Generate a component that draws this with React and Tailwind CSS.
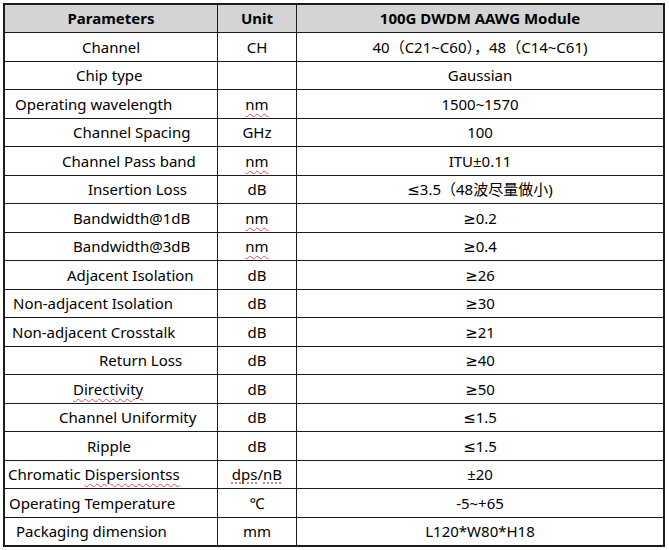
import React from "react";

const squiggle = "underline decoration-wavy decoration-[#e05050] decoration-1 underline-offset-[3px]";
const dotted = "underline decoration-dotted decoration-[#e05050] underline-offset-[3px]";

const rows = [
  { name: "Channel", pad: "pl-[77px]", unit: "CH", value: "40（C21~C60），48（C14~C61)" },
  { name: "Chip type", pad: "pl-[71px]", unit: "", value: "Gaussian" },
  { name: "Operating wavelength", pad: "pl-[10px]", unit: "nm", mark: true, value: "1500~1570" },
  { name: "Channel Spacing", pad: "pl-[68px]", unit: "GHz", value: "100" },
  { name: "Channel Pass band", pad: "pl-[57px]", unit: "nm", mark: true, value: "ITU±0.11" },
  { name: "Insertion Loss", pad: "pl-[83px]", unit: "dB", value: "≤3.5（48波尽量做小)" },
  { name: "Bandwidth@1dB", pad: "pl-[68px]", unit: "nm", mark: true, value: "≥0.2" },
  { name: "Bandwidth@3dB", pad: "pl-[68px]", unit: "nm", mark: true, value: "≥0.4" },
  { name: "Adjacent Isolation", pad: "pl-[62px]", unit: "dB", value: "≥26" },
  { name: "Non-adjacent Isolation", pad: "pl-[8px]", unit: "dB", value: "≥30" },
  { name: "Non-adjacent Crosstalk", pad: "pl-[7px]", unit: "dB", value: "≥21" },
  { name: "Return Loss", pad: "pl-[94px]", unit: "dB", value: "≥40" },
  { name: "Directivity", pad: "pl-[68px]", unit: "dB", value: "≥50", nameMark: true },
  { name: "Channel Uniformity", pad: "pl-[54px]", unit: "dB", value: "≤1.5" },
  { name: "Ripple", pad: "pl-[82px]", unit: "dB", value: "≤1.5" },
  { name: "Chromatic Dispersiontss", pad: "pl-[3px]", unit: "dps/nB", value: "±20", disp: true },
  { name: "Operating Temperature", pad: "pl-[4px]", unit: "℃", value: "-5~+65" },
  { name: "Packaging dimension", pad: "pl-[11px]", unit: "mm", value: "L120*W80*H18" },
];

function Name({ row }) {
  if (row.nameMark) return <span className={squiggle}>{row.name}</span>;
  if (row.disp)
    return (
      <span>
        Chromatic <span className={squiggle}>Dispersiontss</span>
      </span>
    );
  return <span>{row.name}</span>;
}

function Unit({ row }) {
  if (row.mark) return <span className={squiggle}>{row.unit}</span>;
  if (row.disp)
    return (
      <span>
        <span className={dotted}>dps</span>/<span className={dotted}>nB</span>
      </span>
    );
  return <span>{row.unit}</span>;
}

export default function App() {
  return (
    <div className="w-[669px] h-[550px] bg-white pt-[3px] pl-[3px] font-['Noto_Sans','DejaVu_Sans','Noto_Sans_CJK_SC',sans-serif] text-[15px] text-black">
      <div className="w-[662px] border-2 border-[#1c1c1c]">
        <div className="grid grid-cols-[212px_79px_1fr] h-[27px] bg-[#d4d4d4] font-bold">
          <div className="flex items-center justify-center">Parameters</div>
          <div className="flex items-center justify-center border-l border-[#1c1c1c]">Unit</div>
          <div className="flex items-center justify-center border-l border-[#1c1c1c]">100G DWDM AAWG Module</div>
        </div>
        {rows.map((row) => (
          <div key={row.name} className="grid grid-cols-[212px_79px_1fr] h-[28.5px] border-t border-[#1c1c1c]">
            <div className={`flex items-center whitespace-nowrap ${row.pad}`}>
              <Name row={row} />
            </div>
            <div className="flex items-center justify-center border-l border-[#1c1c1c]">
              <Unit row={row} />
            </div>
            <div className="flex items-center justify-center border-l border-[#1c1c1c] whitespace-nowrap">
              {row.value}
            </div>
          </div>
        ))}
      </div>
    </div>
  );
}
